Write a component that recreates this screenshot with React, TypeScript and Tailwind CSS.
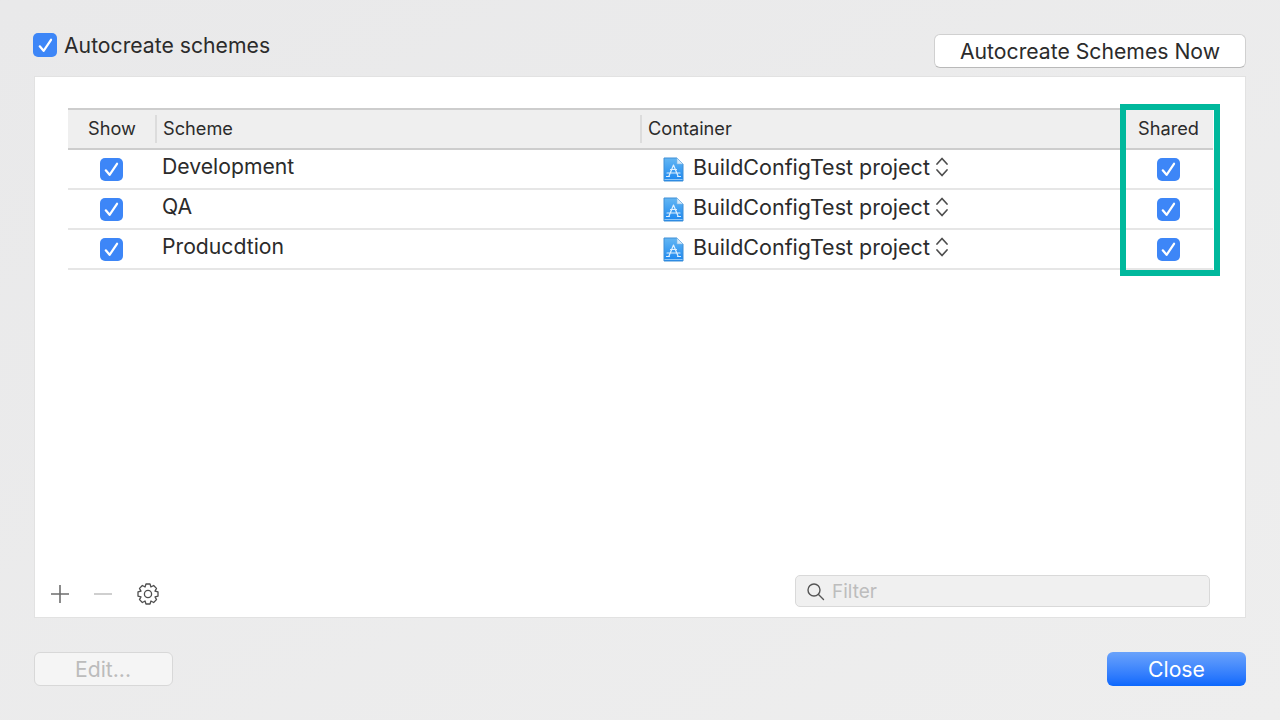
import React from "react";

const font = { fontFamily: "Inter, 'Liberation Sans', sans-serif" };

const schemes = [
  { name: "Development", container: "BuildConfigTest project" },
  { name: "QA", container: "BuildConfigTest project" },
  { name: "Producdtion", container: "BuildConfigTest project" },
];

// eight toothed outline, same as the one in the list toolbar
const gearPath = () => {
  const points: string[] = [];
  for (let i = 0; i < 8; i++) {
    const a = (i * Math.PI) / 4 - Math.PI / 2;
    [[-0.4, 7.6], [-0.2, 10.2], [0.2, 10.2], [0.4, 7.6]].forEach(([da, r]) => {
      points.push(`${(11 + r * Math.cos(a + da)).toFixed(2)} ${(11 + r * Math.sin(a + da)).toFixed(2)}`);
    });
  }
  return "M" + points.join(" L") + " Z";
};

const Check = ({ size = "small" }: { size?: "small" | "large" }) => (
  <div
    className={
      size === "large"
        ? "w-[24px] h-[24px] rounded-[5px] bg-[#3d86f7] flex items-center justify-center shrink-0"
        : "w-[23px] h-[23px] rounded-[5px] bg-[#3d86f7] flex items-center justify-center shrink-0"
    }
  >
    <svg width="17" height="17" viewBox="0 0 16 16" fill="none">
      <path d="M2.6 8.8 L6.2 13 L13.2 2.6" stroke="white" strokeWidth="2.1" strokeLinecap="round" strokeLinejoin="round" />
    </svg>
  </div>
);

const ProjectIcon = () => (
  <svg width="21" height="25" viewBox="0 0 21 25" fill="none" className="shrink-0">
    <defs>
      <linearGradient id="proj" x1="0" y1="0" x2="0" y2="1">
        <stop offset="0" stopColor="#63b6f3" />
        <stop offset="1" stopColor="#1b87f0" />
      </linearGradient>
    </defs>
    <path d="M1 1 H14 L20 7 V24 H1 Z" fill="url(#proj)" stroke="#3f8fd6" strokeWidth="1" />
    <path d="M14 1 V7 H20 Z" fill="#d5e9f9" stroke="#7fb8e6" strokeWidth="0.6" />
    <path d="M10.5 8 L6 19 M10.5 8 L15 19 M4 16 H17 M7.5 12.5 H13.5 M3.5 19.5 H6.5 M14.5 19.5 H17.5" stroke="#dff0fe" strokeWidth="1.2" strokeLinecap="round" />
    <path d="M1.5 22.5 H19.5" stroke="#8cc6f6" strokeWidth="1" />
  </svg>
);

const Updown = () => (
  <svg width="14" height="22" viewBox="0 0 14 22" fill="none" className="shrink-0">
    <path d="M2 8 L7 2.5 L12 8 M2 14 L7 19.5 L12 14" stroke="#4e4e4e" strokeWidth="1.7" strokeLinecap="round" strokeLinejoin="round" />
  </svg>
);

const HeaderCell = ({ label, divider }: { label: string; divider?: boolean }) => (
  <div className="flex items-center h-full pl-[7px]">
    {divider && <div className="w-[2px] h-[28px] bg-[#dcdcdc] -ml-[7px] mr-[6px]" />}
    <span className="-mt-px">{label}</span>
  </div>
);

const App = () => {
  return (
    <div
      className="relative w-[1280px] h-[720px] overflow-hidden flex flex-col px-[34px] bg-gradient-to-br from-[#e9e9ea] to-[#eeeeee] text-[#262626]"
      style={font}
    >
      <div className="h-[76px] flex justify-between shrink-0">
        <div className="flex items-center gap-[7px] h-[24px] mt-[33px] -ml-px text-[21.2px] text-[#2b2b2b]">
          <Check size="large" />
          <span className="mt-[2px]">Autocreate schemes</span>
        </div>
        <button className="mt-[34px] w-[312px] h-[34px] bg-white rounded-[6px] border border-[#d0d0d0] border-b-[#b9b9b9] text-[21.2px] text-[#2b2b2b] flex items-center justify-center">
          <span className="mt-px">Autocreate Schemes Now</span>
        </button>
      </div>

      <div className="h-[542px] shrink-0 bg-white border border-[#e2e2e2] flex flex-col pt-[31px] pl-[33px] pr-[32px]">
        <div className="text-[18.2px] text-[#2b2b2b]">
          <div className="grid grid-cols-[87px_485px_479px_1fr] h-[42px] bg-[#efefef] border-t-2 border-b-2 border-[#cdcdcd]">
            <div className="flex items-center justify-center h-full">
              <span className="-mt-px ml-px">Show</span>
            </div>
            <HeaderCell label="Scheme" divider />
            <HeaderCell label="Container" divider />
            <div className="flex items-center justify-center h-full pl-[5px]">
              <span className="-mt-px">Shared</span>
            </div>
          </div>
          {schemes.map((row) => (
            <div key={row.name} className="grid grid-cols-[87px_485px_479px_1fr] h-[40px] border-b-2 border-[#e6e6e6]">
              <div className="flex items-center justify-center">
                <Check />
              </div>
              <div className="flex items-start pl-[7px] pt-[1px] text-[21.2px] leading-[30px]">{row.name}</div>
              <div className="flex items-center gap-[10px] pl-[23px] text-[21.5px]">
                <ProjectIcon />
                <span className="-ml-px -mt-[4px]">{row.container}</span>
                <span className="-ml-[5px] -mt-[4px]">
                  <Updown />
                </span>
              </div>
              <div className="flex items-center justify-center pl-[5px]">
                <Check />
              </div>
            </div>
          ))}
        </div>

        <div className="mt-auto h-[83px] flex items-start justify-between pt-[41px]">
          <div className="flex items-center h-[20px] mt-[9px] -ml-[18px]">
            <svg width="20" height="20" viewBox="0 0 20 20" fill="none">
              <path d="M10 1 V19 M1 10 H19" stroke="#6e6e6e" strokeWidth="1.6" />
            </svg>
            <svg width="20" height="20" viewBox="0 0 20 20" fill="none" className="ml-[23px]">
              <path d="M1 10 H19" stroke="#c4c4c4" strokeWidth="1.6" />
            </svg>
            <svg width="22" height="22" viewBox="0 0 22 22" fill="none" className="ml-[24px]">
              <path d={gearPath()} stroke="#4e4e4e" strokeWidth="1.3" strokeLinejoin="round" />
              <circle cx="11" cy="11" r="3.6" stroke="#4e4e4e" strokeWidth="1.3" />
            </svg>
          </div>
          <div className="w-[415px] h-[32px] mr-[3px] bg-[#f0f0f0] border border-[#d9d9d9] rounded-[5px] flex items-center pl-[10px] gap-[7px]">
            <svg width="19" height="19" viewBox="0 0 19 19" fill="none">
              <circle cx="8" cy="8" r="6" stroke="#555555" strokeWidth="1.4" />
              <path d="M12.5 12.5 L17.5 17.5" stroke="#555555" strokeWidth="1.4" strokeLinecap="round" />
            </svg>
            <span className="text-[19px] text-[#bdbdbd] mt-[2px]">Filter</span>
          </div>
        </div>
      </div>

      <div className="flex justify-between mt-[34px]">
        <button className="w-[139px] h-[34px] rounded-[6px] bg-[#f5f5f5] border border-[#d8d8d8] text-[21.2px] text-[#bcbcbc] flex items-center justify-center">
          <span className="mt-px -ml-px">Edit...</span>
        </button>
        <button className="w-[139px] h-[34px] rounded-[6px] bg-gradient-to-b from-[#69a2fb] to-[#0a68fd] text-white text-[21.2px] flex items-center justify-center">
          <span className="mt-[2px]">Close</span>
        </button>
      </div>

      <div className="absolute left-[1120px] top-[104px] w-[100px] h-[172px] border-[6px] border-[#00b89c]" />
    </div>
  );
};

export default App;
